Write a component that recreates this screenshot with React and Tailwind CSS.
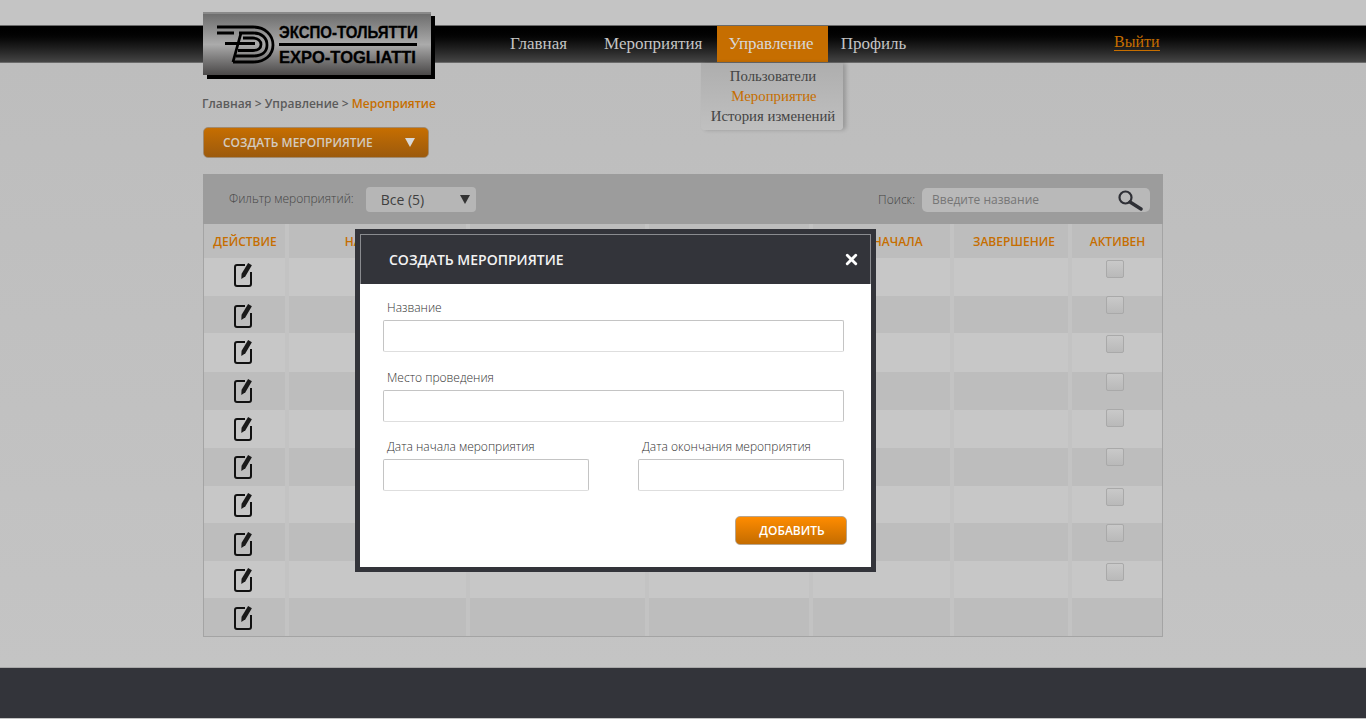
import { X } from 'lucide-react';

const sans = "font-['Open_Sans',sans-serif]";
const serif = "font-['Liberation_Serif',serif]";

const rows = [
  { band: 'h-[38px] bg-[#c7c7c7]', icon: 'pt-[5px]', box: 'pt-[2px]' },
  { band: 'h-[37px] bg-[#bdbdbd]', icon: 'pt-[8px]', box: 'pt-0' },
  { band: 'h-[39px] bg-[#c7c7c7]', icon: 'pt-[7px]', box: 'pt-[2px]' },
  { band: 'h-[38px] bg-[#bdbdbd]', icon: 'pt-[7px]', box: 'pt-[1px]' },
  { band: 'h-[38px] bg-[#c7c7c7]', icon: 'pt-[7px]', box: 'mt-[-1px]' },
  { band: 'h-[38px] bg-[#bdbdbd]', icon: 'pt-[7px]', box: 'pt-0' },
  { band: 'h-[37px] bg-[#c7c7c7]', icon: 'pt-[7px]', box: 'pt-[2px]' },
  { band: 'h-[38px] bg-[#bdbdbd]', icon: 'pt-[9px]', box: 'pt-[1px]' },
  { band: 'h-[37px] bg-[#c7c7c7]', icon: 'pt-[7px]', box: 'pt-[2px]' },
  { band: 'h-[38px] bg-[#bdbdbd]', icon: 'pt-[8px]', box: 'hidden' },
];

const heads = [
  { text: 'ДЕЙСТВИЕ', cls: 'pl-px' },
  { text: 'НАЗВАНИЕ', cls: '' },
  { text: 'МЕСТО', cls: '' },
  { text: 'ДАТА', cls: '' },
  { text: 'ДАТА НАЧАЛА', cls: 'pr-[2px]' },
  { text: 'ЗАВЕРШЕНИЕ', cls: 'pl-[6px]' },
  { text: 'АКТИВЕН', cls: 'pl-px' },
];

const cols = 'grid grid-cols-[81px_177px_175px_160px_137px_114px_1fr] gap-x-[4px]';

function EditIcon() {
  return (
    <svg width="18" height="24" viewBox="0 0 18 24" fill="none">
      <path d="M11 2H3a2 2 0 0 0-2 2V21a2 2 0 0 0 2 2h12a2 2 0 0 0 2-2V9" stroke="#111" strokeWidth="2" />
      <path d="M14.1 0 17.9 2.2 11.4 13.2 7.3 16 7.6 10.8Z" fill="#1a1a1a" />
    </svg>
  );
}

function LogoMark() {
  return (
    <svg width="58" height="40" viewBox="0 0 58 40" fill="none" stroke="#000" strokeWidth="2.8">
      <path d="M0 2H36C48 2 56 10 56 20C56 30 48 37 36 37H16" />
      <path d="M0 8H17M22 8H36C45 8 50 13 50 20C50 27 45 31 36 31H19" />
      <path d="M26 13H36C41 13 44 16 44 19.5C44 23 41 25.5 36 25.5H21" />
      <path d="M8 18.5H38M24 8 16 37" />
    </svg>
  );
}

function Field({ label, className }) {
  return (
    <div className={className}>
      <label className="block pl-[4px] text-[12px] font-light leading-[16px] text-[#333] mb-[4px]">{label}</label>
      <div className="h-[32px] w-full rounded-[2px] border border-[#c4c4c4] border-b-[#dedede] bg-white" />
    </div>
  );
}

export default function App() {
  return (
    <div className={`relative min-h-[719px] overflow-hidden bg-[#c4c4c4] ${sans}`}>
      {/* header */}
      <div className="pt-[25px]">
        <div className="h-[38px] border-y border-[#6a6a6a] bg-gradient-to-b from-[#000] to-[#454545]">
          <div className="relative mx-auto flex h-full w-[960px] items-stretch">
            <div className="absolute left-0 top-[-14px] h-[63px] w-[228px] border-t-2 border-[#8a8a8a] bg-gradient-to-b from-[#6e6e6e] via-[#ababab] to-[#4b4949] shadow-[4px_4px_0_#000]">
              <div className="flex items-center pl-[14px] pt-[10px]">
                <LogoMark />
                <div className="ml-[4px] w-[138px] font-['Liberation_Sans',sans-serif] text-[16.5px] font-bold leading-[16px] text-black [-webkit-text-stroke:0.3px_black]">
                  <div className="origin-left scale-x-[0.91] whitespace-nowrap">ЭКСПО-ТОЛЬЯТТИ</div>
                  <div className="mb-[3px] mt-[3px] h-[3px] bg-black" />
                  <div className="whitespace-nowrap">EXPO-TOGLIATTI</div>
                </div>
              </div>
            </div>
            <nav className={`ml-[289px] flex text-[17px] text-[#c4c4c4] ${serif}`}>
              <a className="flex items-center px-[18px]">Главная</a>
              <a className="flex items-center pl-[19px] pr-[15px]">Мероприятия</a>
              <a className="flex items-center bg-[#c66e00] pl-[11px] pr-[14px] text-[#d8d8d8]">Управление</a>
              <a className="flex items-center px-[13px]">Профиль</a>
            </nav>
            <a className={`absolute left-[911px] top-[7px] border-b border-[#c66e00] text-[16px] leading-[17px] text-[#c66e00] ${serif}`}>Выйти</a>
            <div className={`absolute left-[498px] top-[37px] z-10 h-[67px] w-[142px] rounded-b-[4px] bg-gradient-to-b from-[#aeaeae] to-[#c0c0c0] pl-[2px] pt-[3px] text-center text-[14.8px] leading-[20px] text-[#444] shadow-[3px_0_4px_rgba(0,0,0,0.2)] ${serif}`}>
              <div>Пользователи</div>
              <div className="pl-[2px] text-[#c66e00]">Мероприятие</div>
              <div className="whitespace-nowrap">История изменений</div>
            </div>
          </div>
        </div>
      </div>

      <div className="bg-gradient-to-b from-[#bdbdbd] to-[#c4c4c4] pb-[30px]">
        <main className="mx-auto w-[960px]">
          <div className="ml-[-1px] pt-[32px] text-[12px] font-semibold leading-[18px] text-[#5b5b5b]">
            Главная &gt; Управление &gt; <span className="text-[#c66e00]">Мероприятие</span>
          </div>
          <div className="mt-[14px] flex h-[31px] w-[226px] items-center justify-between rounded-[5px] border border-[#a08a70] bg-gradient-to-b from-[#c66e00] to-[#9c5a0c] pl-[19px] pr-[13px] text-[12px] font-semibold text-[#d3cbc0]">
            <span>СОЗДАТЬ МЕРОПРИЯТИЕ</span>
            <span className="h-0 w-0 border-x-[5px] border-t-[9px] border-x-transparent border-t-[#d8d8d8]" />
          </div>

          {/* table */}
          <div className="mt-[16px] border-x border-b border-[#a4a4a4]">
            <div className="mx-[-1px] flex h-[50px] items-center justify-between bg-[#9c9c9c] pl-[26px] pr-[13px]">
              <div className="flex items-center">
                <span className="mr-[12px] text-[12px] font-light text-[#444]">Фильтр мероприятий:</span>
                <div className="flex h-[25px] w-[110px] items-center justify-between rounded-[4px] bg-[#b6b6b6] pl-[15px] pr-[6px] text-[14px] font-medium text-[#3f3f3f]">
                  <span>Все (5)</span>
                  <span className="h-0 w-0 border-x-[5px] border-t-[9px] border-x-transparent border-t-[#333]" />
                </div>
              </div>
              <div className="flex items-center pt-[2px]">
                <span className="mr-[7px] text-[12px] font-light text-[#444]">Поиск:</span>
                <div className="flex h-[24px] w-[228px] items-center justify-between rounded-[5px] bg-[#b9b9b9] pl-[10px] pr-[6px] text-[12px] text-[#767676]">
                  <span>Введите название</span>
                  <svg width="28" height="22" viewBox="0 0 28 22" fill="none" stroke="#2f3036">
                    <circle cx="9.5" cy="8.5" r="6" strokeWidth="2.2" />
                    <path d="M14 13 25 20" strokeWidth="3.4" strokeLinecap="round" />
                  </svg>
                </div>
              </div>
            </div>
            <div className={`${cols} h-[34px] bg-[#c3c3c3]`}>
              {heads.map((h) => (
                <div key={h.text} className={`flex items-center justify-center whitespace-nowrap bg-[#bdbdbd] pt-px text-[12px] font-semibold text-[#c66e00] ${h.cls}`}>{h.text}</div>
              ))}
            </div>
            {rows.map((r, i) => (
              <div key={i} className={`${cols} bg-[#c3c3c3]`}>
                {[0, 1, 2, 3, 4, 5, 6].map((c) => (
                  <div key={c} className={`${r.band} flex justify-center`}>
                    {c === 0 && <div className={`${r.icon} mr-[3px]`}><EditIcon /></div>}
                    {c === 6 && (
                      <div className={`${r.box} mr-[4px]`}>
                        <div className="h-[18px] w-[18px] rounded-[2px] border border-[#a9a9a9] bg-gradient-to-b from-[#c9c9c9] to-[#b9b9b9]" />
                      </div>
                    )}
                  </div>
                ))}
              </div>
            ))}
          </div>
        </main>
      </div>

      <footer className="h-[51px] border-t border-[#a8a8a8] bg-[#33343a]" />

      {/* modal */}
      <div className="absolute left-[355px] top-[229px] z-20 w-[521px] border-[5px] border-[#33343a] bg-white">
        <div className="flex h-[50px] items-center justify-between border border-b-0 border-[#8a8b8f] bg-[#33343a] pl-[28px] pr-[10px] text-white">
          <span className="text-[14px] font-semibold text-[#f2f2f2]">СОЗДАТЬ МЕРОПРИЯТИЕ</span>
          <X size={17} strokeWidth={4} />
        </div>
        <div className="h-[283px] px-[23px] pt-[16px]">
          <Field label="Название" className="w-[461px]" />
          <Field label="Место проведения" className="mt-[18px] w-[461px]" />
          <div className="mt-[17px] flex w-[461px] justify-between">
            <Field label="Дата начала мероприятия" className="w-[206px]" />
            <Field label="Дата окончания мероприятия" className="w-[206px]" />
          </div>
          <div className="mt-[25px] flex w-[464px] justify-end">
            <div className="flex h-[29px] w-[112px] items-center justify-center rounded-[5px] border border-[#b8a58e] bg-gradient-to-b from-[#ff8c00] to-[#c46c00] pl-[2px] text-[12px] font-semibold text-white">
              ДОБАВИТЬ
            </div>
          </div>
        </div>
      </div>
    </div>
  );
}
